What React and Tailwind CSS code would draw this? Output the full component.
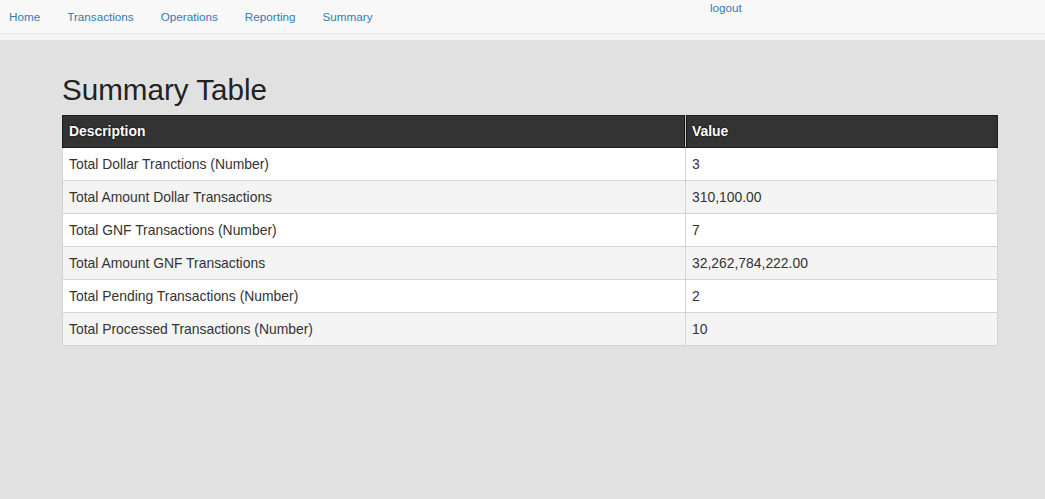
const NAV_LINKS = ['Home', 'Transactions', 'Operations', 'Reporting', 'Summary']

const ROWS = [
  ['Total Dollar Tranctions (Number)', '3'],
  ['Total Amount Dollar Transactions', '310,100.00'],
  ['Total GNF Transactions (Number)', '7'],
  ['Total Amount GNF Transactions', '32,262,784,222.00'],
  ['Total Pending Transactions (Number)', '2'],
  ['Total Processed Transactions (Number)', '10'],
]

export default function App() {
  return (
    <div className="min-h-[499px] bg-[#e1e1e1] font-['Liberation_Sans',Arial,sans-serif] text-[#333]">
      {/* Top nav */}
      <div className="bg-[#f8f8f8] border-b border-[#e7e7e7]">
        <div className="relative flex h-[33px] items-center gap-[27px] pl-[9px] text-[11.7px] text-[#337ab7]">
          {NAV_LINKS.map(link => (
            <a key={link} href="#" className="leading-none">{link}</a>
          ))}
          <a href="#" className="absolute left-[710px] top-[2px] leading-[12px]">logout</a>
        </div>
      </div>
      <div className="h-[6px] bg-[#f4f4f4]"></div>

      <div className="px-[62px] pt-[33px]">
        <h1 className="text-[29.6px] leading-[34px] text-[#222] mb-[8px]">Summary Table</h1>

        <table className="w-[936px] border-collapse text-[13.9px]">
          <thead>
            <tr className="bg-[#333] text-white font-bold [text-shadow:0_0_2px_#000]">
              <th className="w-[623px] h-[32px] text-left px-[6px] border border-[#1c1c1c] border-r-[#c8c8c8] shadow-[inset_-1px_0_0_#111]">Description</th>
              <th className="h-[32px] text-left px-[6px] border border-[#1c1c1c] shadow-[inset_1px_0_0_#111]">Value</th>
            </tr>
          </thead>
          <tbody>
            {ROWS.map(([desc, value], i) => (
              <tr key={desc} className={i % 2 === 0 ? 'bg-white' : 'bg-[#f4f4f4]'}>
                <td className="h-[33px] px-[6px] border border-[#d4d4d4]">{desc}</td>
                <td className="h-[33px] px-[6px] border border-[#d4d4d4]">{value}</td>
              </tr>
            ))}
          </tbody>
        </table>
      </div>
    </div>
  )
}
